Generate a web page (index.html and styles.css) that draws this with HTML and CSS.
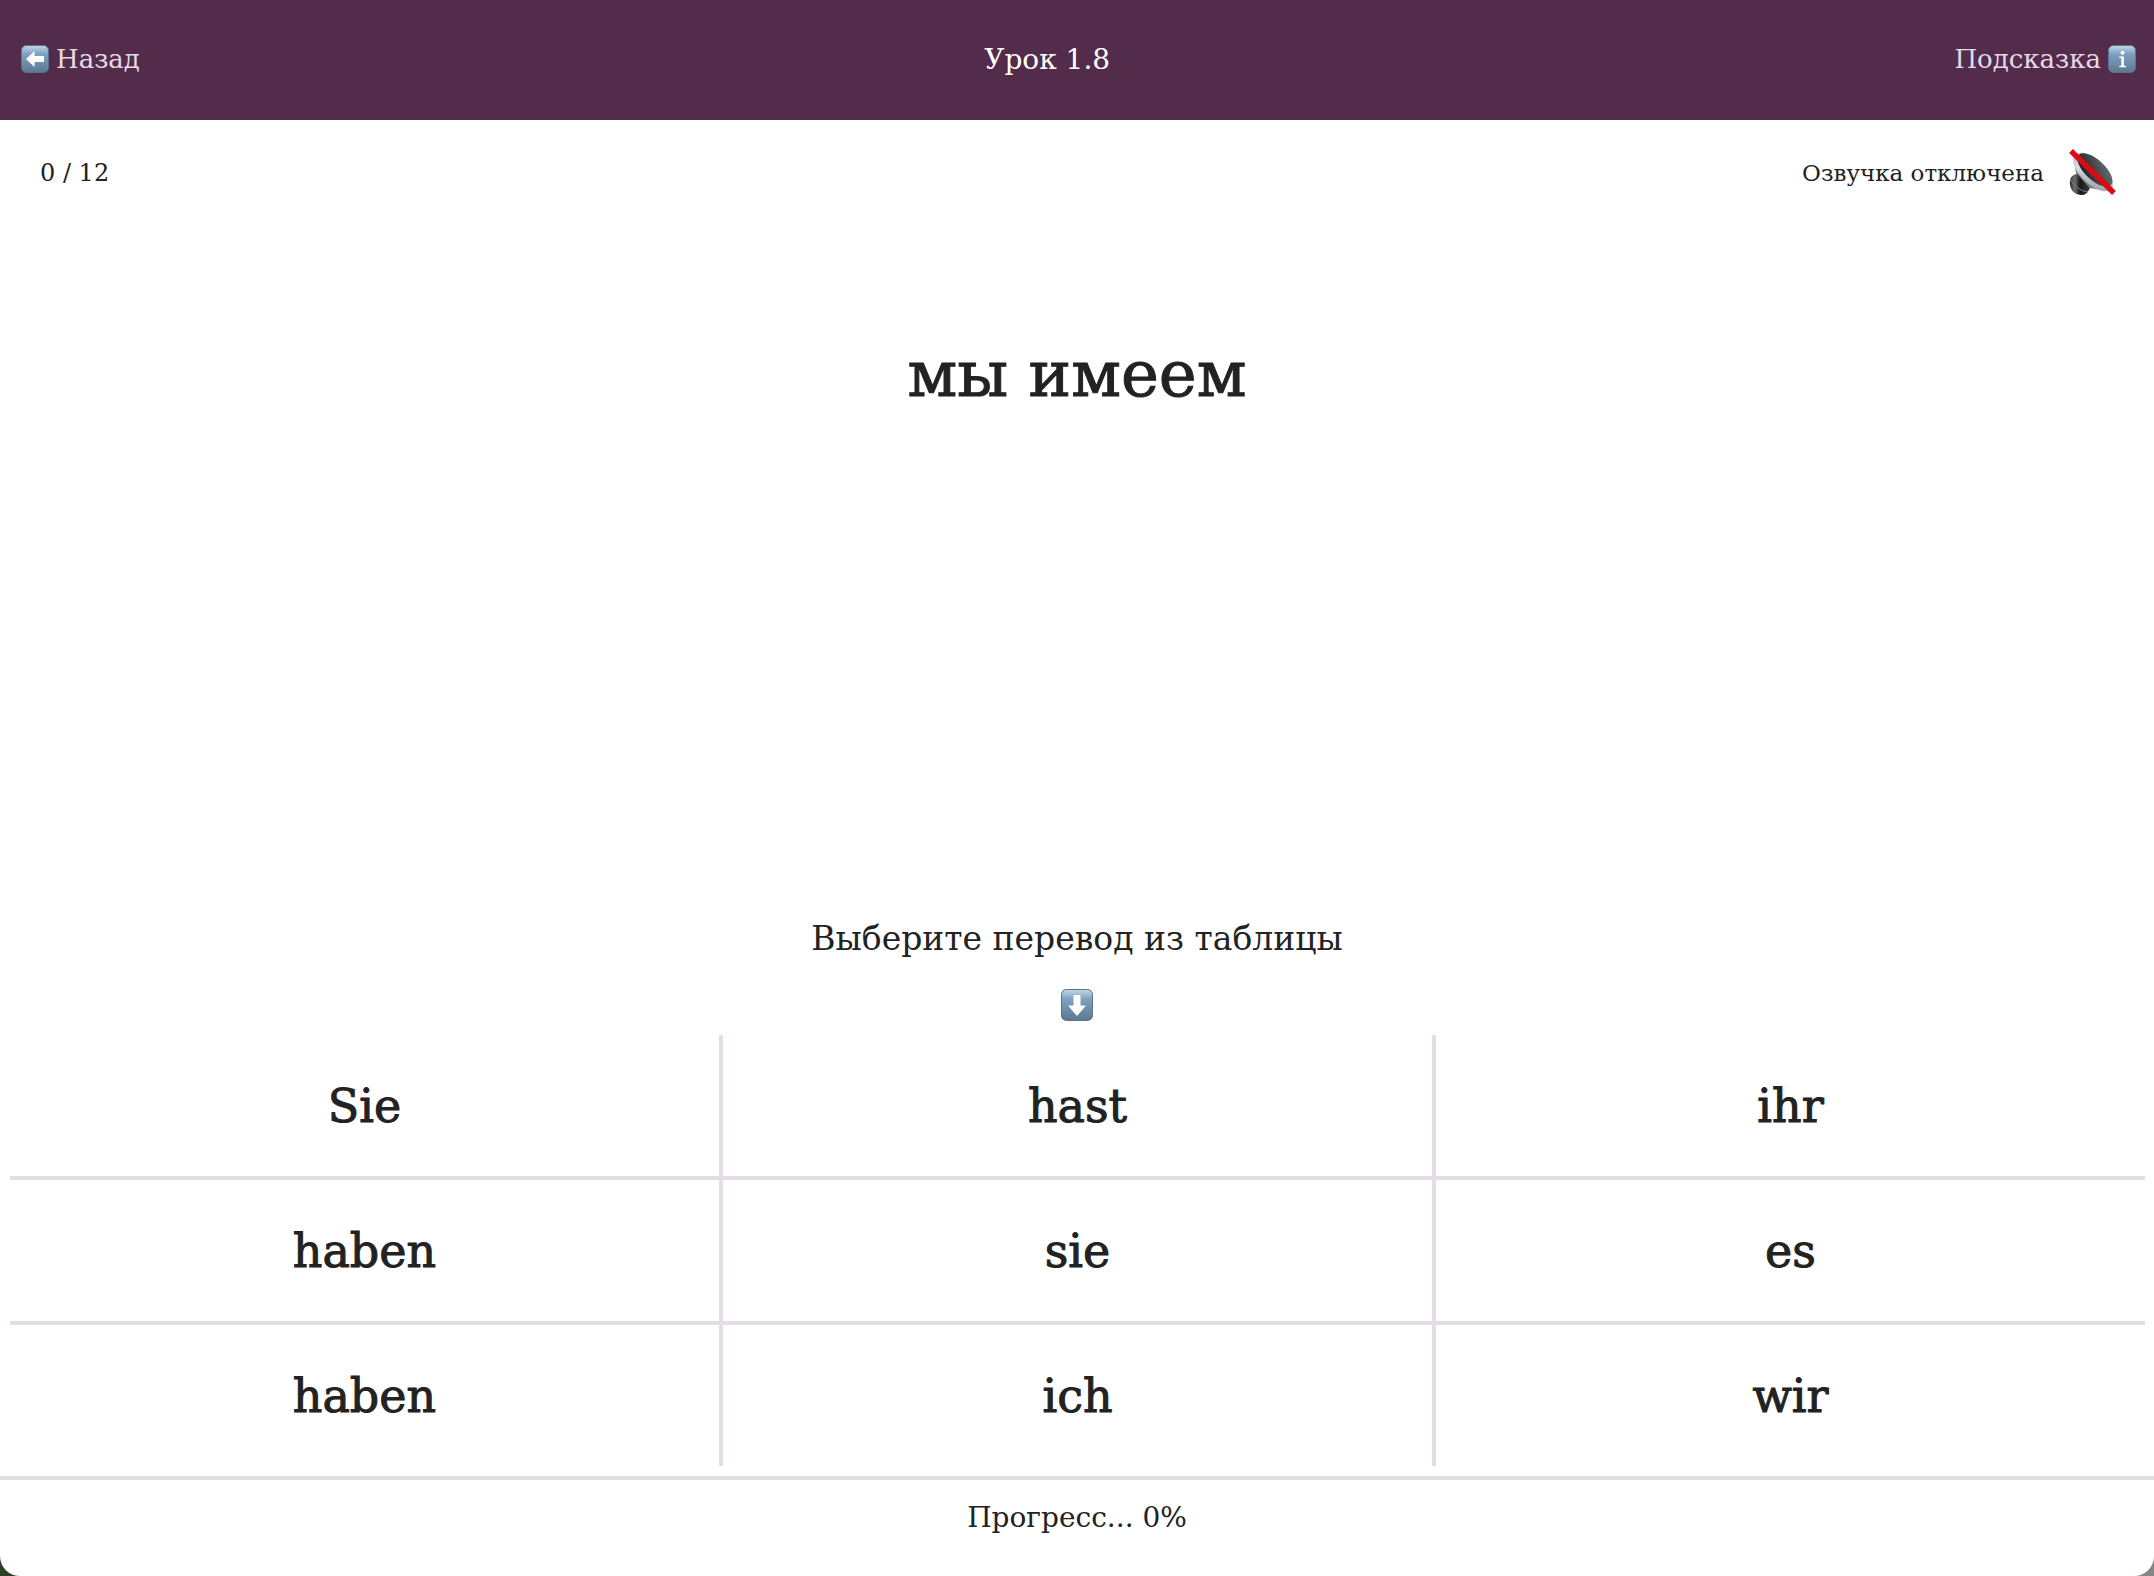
FILE: index.html
```html
<!DOCTYPE html>
<html lang="ru">
<head>
<meta charset="utf-8">
<meta name="viewport" content="width=device-width, initial-scale=1">
<title>Урок 1.8</title>
<link rel="stylesheet" href="styles.css">
</head>
<body>
<svg class="defs" width="0" height="0" aria-hidden="true">
  <defs>
    <linearGradient id="tile" x1="0" y1="0" x2="0" y2="1">
      <stop offset="0" stop-color="#c3d5e3"/>
      <stop offset=".12" stop-color="#a9c3d8"/>
      <stop offset=".3" stop-color="#7fa3c4"/>
      <stop offset=".6" stop-color="#6f90ad"/>
      <stop offset="1" stop-color="#5d788e"/>
    </linearGradient>
  </defs>
</svg>
<div class="page">
  <header class="topbar">
    <a class="nav-link" href="#back">
      <svg class="tile" viewBox="0 0 28 28" aria-hidden="true"><rect x=".5" y=".5" width="27" height="27" rx="5" fill="url(#tile)" stroke="#58748c"/><path d="M5 14 13.500 6v5H23v6h-9.500v5z" fill="#fff"/></svg>
      <span>Назад</span>
    </a>
    <h1 class="title">Урок 1.8</h1>
    <a class="nav-link" href="#hint">
      <span>Подсказка</span>
      <svg class="tile" viewBox="0 0 28 28" aria-hidden="true"><rect x=".5" y=".5" width="27" height="27" rx="5" fill="url(#tile)" stroke="#58748c"/><circle cx="14.500" cy="7.800" r="2" fill="#fff"/><path d="M11.300 11.500h4.600v9.300h2v1.400h-6.600v-1.400h2v-7.900h-2z" fill="#fff"/></svg>
    </a>
  </header>
  <main class="lesson">
    <div class="status">
      <span class="count">0 / 12</span>
      <button class="sound" type="button">
        <span>Озвучка отключена</span>
        <svg class="speaker" viewBox="0 0 48 48" aria-hidden="true">
          <defs>
            <linearGradient id="cone" x1="0" y1="1" x2="1" y2="0"><stop offset="0" stop-color="#141617"/><stop offset="1" stop-color="#71787a"/></linearGradient>
            <linearGradient id="rim" x1="0" y1="0" x2="1" y2="1"><stop offset="0" stop-color="#9fa1aa"/><stop offset=".5" stop-color="#d8d9e2"/><stop offset="1" stop-color="#8f9096"/></linearGradient>
            <linearGradient id="magnet" x1="0" y1="0" x2="1" y2="0"><stop offset="0" stop-color="#2c2f31"/><stop offset=".25" stop-color="#6d7173"/><stop offset=".5" stop-color="#151718"/><stop offset="1" stop-color="#3c3f41"/></linearGradient>
          </defs>
          <path d="M6 12C7 20 8 25 10 27L22 39C29 40 38 43 44 41z" fill="#77777c"/>
          <path d="M9 25C4 25 1 30 2 36C3 42 7 46 14 46C18 46 20 43 22 39z" fill="url(#magnet)"/>
          <path d="M3 31C6 37 12 42 20 43" fill="none" stroke="#85898b" stroke-width="1"/>
          <ellipse cx="25" cy="23" rx="25" ry="12" transform="rotate(43 25 23)" fill="url(#rim)"/>
          <ellipse cx="27" cy="21" rx="22" ry="10" transform="rotate(43 27 21)" fill="url(#cone)"/>
          <path d="M5 4 44 42" stroke="#dc0a14" stroke-width="5.500" stroke-linecap="square"/>
        </svg>
      </button>
    </div>
    <div class="question"><h2 class="word">мы имеем</h2></div>
    <div class="prompt">
      <p class="prompt-text">Выберите перевод из таблицы</p>
      <svg class="tile-down" viewBox="0 0 32 32" aria-hidden="true"><rect x=".5" y=".5" width="31" height="31" rx="5" fill="url(#tile)" stroke="#58748c"/><path d="M12.500 6h7v10.500H25L16 27 7 16.500h5.500z" fill="#fff"/></svg>
    </div>
    <div class="answers">
      <button type="button">Sie</button>
      <button type="button">hast</button>
      <button type="button">ihr</button>
      <button type="button">haben</button>
      <button type="button">sie</button>
      <button type="button">es</button>
      <button type="button">haben</button>
      <button type="button">ich</button>
      <button type="button">wir</button>
    </div>
  </main>
  <footer class="progress">Прогресс... 0%</footer>
</div>
</body>
</html>
```
FILE: styles.css
```css
* { box-sizing: border-box; }

html {
  background: linear-gradient(90deg, #2d4227 50%, #858585 50%);
}

body {
  margin: 0;
  color: #222;
  font-family: "Roboto Slab", "DejaVu Serif", serif;
}

h1, h2, p { margin: 0; font-weight: inherit; }

button {
  border: 0;
  padding: 0;
  background: #fff;
  color: inherit;
  font: inherit;
  cursor: pointer;
}

.defs { position: absolute; }

.page {
  display: flex;
  flex-direction: column;
  min-height: 100vh;
  background: #fff;
  border-radius: 0 0 20px 20px;
}

.topbar {
  display: flex;
  align-items: center;
  justify-content: space-between;
  height: 120px;
  padding: 0 18px 2px 21px;
  background: #532b4b;
  color: #fff;
}

.nav-link {
  display: flex;
  align-items: center;
  gap: 7px;
  color: #e6dae6;
  font-size: 26px;
  text-decoration: none;
}

.title { font-size: 28px; }

.tile { width: 28px; height: 28px; }

.lesson {
  display: flex;
  flex: 1;
  flex-direction: column;
}

.status {
  display: flex;
  align-items: center;
  justify-content: space-between;
  padding: 24px 38px 0 40px;
  font-size: 24px;
}

.sound {
  display: flex;
  align-items: center;
  gap: 24px;
  font-size: 23px;
}

.speaker { width: 48px; height: 58px; }

.question {
  flex: 1;
  padding-top: 132px;
  text-align: center;
}

.word {
  font-size: 64px;
  line-height: 80px;
  -webkit-text-stroke: 1px;
}

.prompt {
  display: flex;
  flex-direction: column;
  align-items: center;
  gap: 28px;
  padding-bottom: 14px;
}

.prompt-text { font-size: 33px; line-height: 44px; }

.tile-down { width: 32px; height: 32px; }

.answers {
  display: grid;
  grid-template-columns: repeat(3, 1fr);
  grid-auto-rows: 141px;
  gap: 4px;
  margin: 0 9px 10px 10px;
  background: #e6dce8;
  font-size: 46px;
}

.answers button { -webkit-text-stroke: 1px; }

.progress {
  height: 100px;
  border-top: 4px solid #e6dce8;
  font-size: 28px;
  line-height: 76px;
  text-align: center;
}
```
